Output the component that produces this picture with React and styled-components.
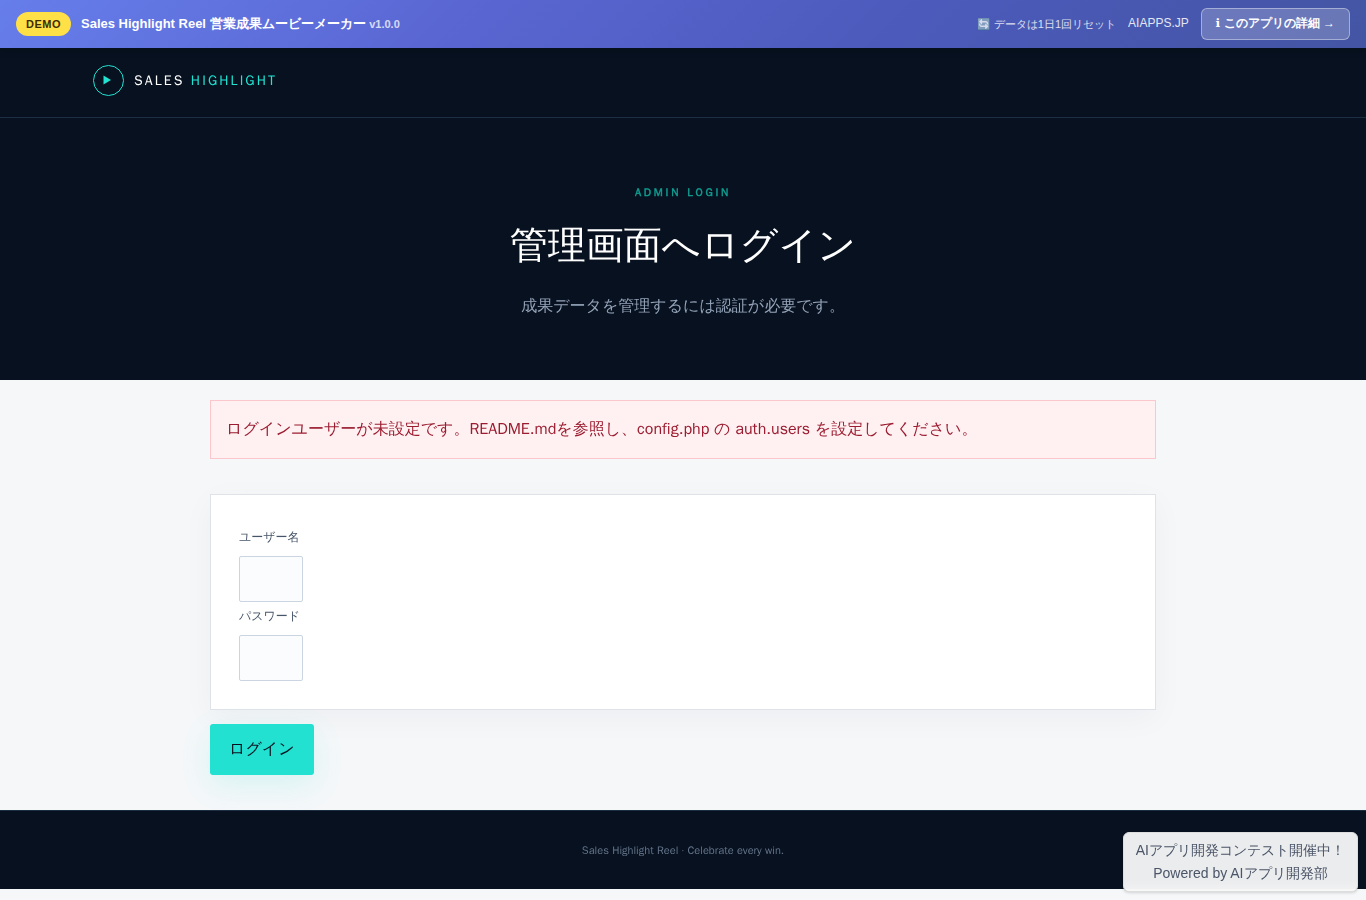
import React from "react"
import styled, { createGlobalStyle } from "styled-components"

const GlobalStyle = createGlobalStyle`
  * {
    box-sizing: border-box;
  }
  body {
    margin: 0;
    background: #f5f7f9;
    color: #07111f;
    font-family: "WenQuanYi Zen Hei", "Noto Sans CJK JP", sans-serif;
    font-size: 16px;
    line-height: 28px;
  }
`

const DemoBar = styled.div`
  position: relative;
  z-index: 2;
  display: flex;
  justify-content: space-between;
  align-items: center;
  flex-wrap: wrap;
  gap: 8px;
  min-height: 48px;
  padding: 8px 16px;
  background: linear-gradient(135deg, #667eea 0%, #5a67d3 33%, #4c5abb 66%, #4355a3 100%);
  box-shadow: 0 2px 8px rgba(0, 0, 0, 0.15);
  color: #fff;
  font-family: "Liberation Sans", sans-serif;
  line-height: 20px;
`
const BarGroup = styled.div`
  display: flex;
  align-items: center;
  gap: ${props => props.$gap};
`
const Badge = styled.span`
  padding: 2px 10px;
  border-radius: 12px;
  background: #ffe046;
  color: #3d2c00;
  font-size: 11px;
  font-weight: bold;
  letter-spacing: 0.5px;
`
const AppName = styled.strong`
  font-size: 13px;

  small {
    font-size: 11px;
    opacity: 0.75;
  }
`
const ResetNote = styled.span`
  font-size: 11px;
  opacity: 0.8;
`
const SiteLink = styled.a`
  padding-bottom: 2px;
  color: #fff;
  font-size: 12px;
  text-decoration: none;
  opacity: 0.85;
`
const DetailLink = styled.a`
  padding: 4px 14px 6px;
  border: 1px solid rgba(255, 255, 255, 0.4);
  border-radius: 6px;
  background: rgba(255, 255, 255, 0.2);
  color: #fff;
  font-size: 12px;
  font-weight: bold;
  text-decoration: none;
`
const InfoGlyph = styled.span`
  font-family: "DejaVu Sans", sans-serif;
`

const Header = styled.header`
  padding: 17px 24px 21px;
  border-bottom: 1px solid #1b2e42;
  background: #07111f;
`
const HeaderInner = styled.div`
  max-width: 1180px;
  margin: 0 auto;
`
const Brand = styled.a`
  display: inline-flex;
  align-items: center;
  gap: 10px;
  color: #fff;
  font-size: 14px;
  letter-spacing: 0.15em;
  text-decoration: none;
  vertical-align: top;

  em {
    color: #20e3d2;
    font-style: normal;
  }
`
const Mark = styled.span`
  display: grid;
  place-items: center;
  width: 31px;
  height: 31px;
  padding: 0 3px 1px 0;
  border: 1px solid #20e3d2;
  border-radius: 50%;
`

const Hero = styled.section`
  padding: 60px 24px;
  background: #07111f;
  text-align: center;
`
const Eyebrow = styled.p`
  margin: 0;
  color: #109e92;
  font-size: 11px;
  font-weight: bold;
  letter-spacing: 0.25em;
  -webkit-text-stroke: 0.04em;
`
const Title = styled.h1`
  margin: 12px 0 20px;
  color: #fff;
  font-size: 38px;
  font-weight: 300;
  line-height: 54px;
`
const Lead = styled.p`
  margin: 0;
  color: #94a3b8;
  line-height: 28px;
`

const Main = styled.main`
  max-width: 994px;
  margin: 0 auto;
  padding: 20px 24px 35px;
`
const Alert = styled.div`
  margin-bottom: 35px;
  padding: 14px 15px 15px;
  border: 1px solid #fbc7cd;
  background: #fff0f1;
  color: #9b1c30;
`
const Panel = styled.div`
  margin-bottom: 14px;
  padding: 28px;
  border: 1px solid #dfe3e9;
  background: #fff;
  box-shadow: 0 8px 30px rgba(15, 23, 42, 0.04);
`
const Label = styled.label`
  display: block;
  padding-bottom: 5px;
  color: #475569;
  font-size: 12px;
`
const Input = styled.input`
  display: block;
  width: 64px;
  height: 46px;
  padding: 10px 12px;
  border: 1px solid #cbd5e1;
  border-radius: 2px;
  background: #fbfcfe;
  font: inherit;
`
const Submit = styled.button`
  display: block;
  padding: 11px 19px 12px;
  border: 0;
  border-radius: 3px;
  background: #22e1d1;
  box-shadow: 0 10px 30px rgba(32, 227, 210, 0.14);
  color: #07111f;
  font: inherit;
`

const Footer = styled.footer`
  padding: 25px 24px;
  border-top: 1px solid #1b2e42;
  background: #07111f;
  color: #64748b;
  font-size: 11px;
  text-align: center;
`
const Powered = styled.aside`
  position: fixed;
  right: 8px;
  bottom: 8px;
  padding: 6px 12px;
  border: 1px solid #ddd;
  border-radius: 6px;
  background: rgba(255, 255, 255, 0.92);
  backdrop-filter: blur(4px);
  box-shadow: 0 1px 3px rgba(0, 0, 0, 0.15);
  color: #4a5568;
  font-family: "Liberation Sans", sans-serif;
  font-size: 14px;
  line-height: 23px;
  text-align: center;
`

const App = () => (
  <>
    <GlobalStyle />
    <DemoBar>
      <BarGroup $gap="10px">
        <Badge>DEMO</Badge>
        <AppName>
          Sales Highlight Reel 営業成果ムービーメーカー <small>v1.0.0</small>
        </AppName>
      </BarGroup>
      <BarGroup $gap="12px">
        <ResetNote>🔄 データは1日1回リセット</ResetNote>
        <SiteLink href="#aiapps">AIAPPS.JP</SiteLink>
        <DetailLink href="#detail">
          <InfoGlyph>ℹ</InfoGlyph> このアプリの詳細 →
        </DetailLink>
      </BarGroup>
    </DemoBar>
    <Header>
      <HeaderInner>
        <Brand href="#top">
          <Mark>
            <svg width="8" height="10" viewBox="0 0 8 10" aria-hidden="true">
              <path d="M0.5 0.5L8 5L0.5 9.5Z" fill="#20e3d2" />
            </svg>
          </Mark>
          <span>
            SALES <em>HIGHLIGHT</em>
          </span>
        </Brand>
      </HeaderInner>
    </Header>
    <Hero>
      <Eyebrow>ADMIN LOGIN</Eyebrow>
      <Title>管理画面へログイン</Title>
      <Lead>成果データを管理するには認証が必要です。</Lead>
    </Hero>
    <Main>
      <Alert role="alert">
        ログインユーザーが未設定です。README.mdを参照し、config.php の auth.users
        を設定してください。
      </Alert>
      <form onSubmit={e => e.preventDefault()}>
        <Panel>
          <Label htmlFor="username">ユーザー名</Label>
          <Input id="username" type="text" autoComplete="username" />
          <Label htmlFor="password">パスワード</Label>
          <Input id="password" type="password" autoComplete="current-password" />
        </Panel>
        <Submit type="submit">ログイン</Submit>
      </form>
    </Main>
    <Footer>Sales Highlight Reel · Celebrate every win.</Footer>
    <Powered>
      AIアプリ開発コンテスト開催中！
      <br />
      Powered by AIアプリ開発部
    </Powered>
  </>
)

export default App
